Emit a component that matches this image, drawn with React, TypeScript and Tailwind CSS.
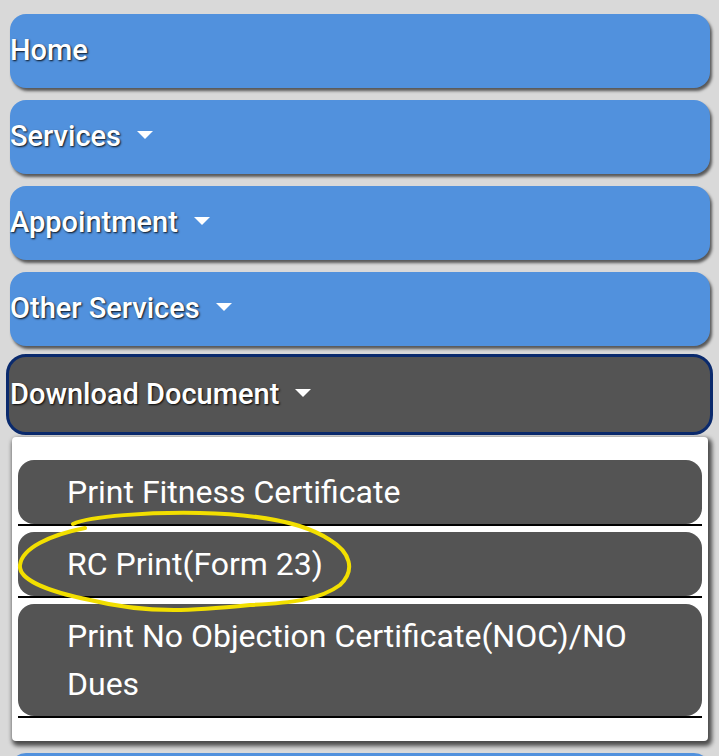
import React from "react";

const TOP_LINKS = [
  { label: "Home", caret: false },
  { label: "Services", caret: true },
  { label: "Appointment", caret: true },
  { label: "Other Services", caret: true },
];

const DOCUMENTS = [
  "Print Fitness Certificate",
  "RC Print(Form 23)",
  "Print No Objection Certificate(NOC)/NO Dues",
];

const Caret = () => (
  <span className="ml-4 mb-1 inline-block h-0 w-0 border-x-8 border-t-8 border-x-transparent border-t-white" />
);

const NavButton = ({ label, caret }: { label: string; caret: boolean }) => (
  <li>
    <a className="flex h-[74px] items-center rounded-[16px] bg-[#5191dd] text-[29px] font-medium text-white shadow-[2px_3px_3px_rgba(0,0,0,0.6)] [text-shadow:1px_1px_2px_rgba(0,0,0,0.9)]">
      {label}
      {caret && <Caret />}
    </a>
  </li>
);

export default function App() {
  return (
    <div className="relative h-[756px] overflow-hidden bg-[#d9d9d9] pl-[10px] pr-[9px] pt-[14px] font-['Roboto','Liberation_Sans',sans-serif]">
      <ul className="flex flex-col gap-3">
        {TOP_LINKS.map((link) => (
          <NavButton key={link.label} label={link.label} caret={link.caret} />
        ))}

        {/* open dropdown */}
        <li className="-mt-[4px]">
          <a className="-ml-[4px] -mr-[3px] flex h-[81px] items-center rounded-[20px] border-[3px] border-[#0a2a6d] bg-[#545454] pl-[1px] text-[29px] font-medium text-white [text-shadow:1px_1px_2px_rgba(0,0,0,0.9)]">
            Download Document
            <Caret />
          </a>
          <ul className="mx-[2px] mt-[2px] rounded-[4px] bg-white px-[6px] pb-[17px] pt-[23px] shadow-[2px_3px_4px_2px_rgba(0,0,0,0.65)]">
            {DOCUMENTS.map((doc) => (
              <li key={doc} className="mb-[6px] border-b-2 border-black">
                <a className="block rounded-[16px] bg-[#545454] py-2 pl-[49px] pr-2 text-[32px] leading-[48px] text-white">
                  {doc}
                </a>
              </li>
            ))}
          </ul>
        </li>

        <li>
          <a className="flex h-[74px] items-center rounded-[16px] bg-[#5191dd] shadow-[2px_3px_3px_rgba(0,0,0,0.6)]" />
        </li>
      </ul>

      {/* hand-drawn highlight */}
      <svg
        className="pointer-events-none absolute left-0 top-0"
        width="719"
        height="756"
        viewBox="0 0 719 756"
        fill="none"
      >
        <path
          d="M73 524 C90 516 150 512 200 513 C250 514 300 520 330 540 C350 552 356 570 340 585 C320 600 290 603 250 605 C200 610 150 615 90 600 C50 592 18 580 20 565 C22 548 50 535 85 528"
          stroke="#f2df00"
          strokeWidth="4"
          strokeLinecap="round"
        />
      </svg>
    </div>
  );
}
